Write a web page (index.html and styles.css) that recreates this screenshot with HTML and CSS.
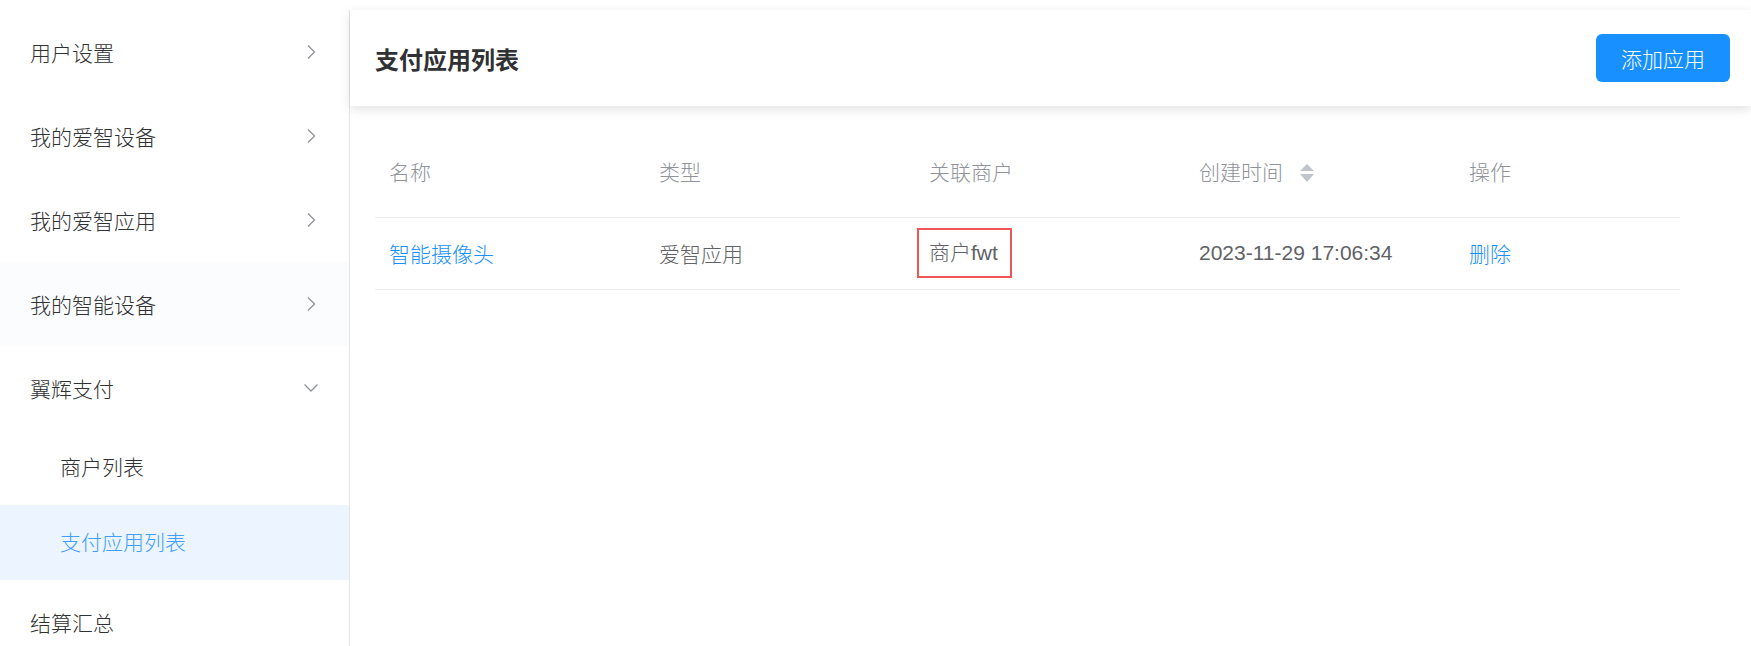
FILE: index.html
```html
<!DOCTYPE html>
<html lang="zh-CN">
<head>
<meta charset="utf-8">
<title>支付应用列表</title>
<link rel="stylesheet" href="styles.css">
</head>
<body>
<div class="app">
  <aside class="sidebar">
    <ul class="menu">
      <li class="menu-item">
        <span>用户设置</span>
        <svg class="arrow" viewBox="0 0 14 14"><polyline points="4,0.5 10.5,7 4,13.5"/></svg>
      </li>
      <li class="menu-item">
        <span>我的爱智设备</span>
        <svg class="arrow" viewBox="0 0 14 14"><polyline points="4,0.5 10.5,7 4,13.5"/></svg>
      </li>
      <li class="menu-item">
        <span>我的爱智应用</span>
        <svg class="arrow" viewBox="0 0 14 14"><polyline points="4,0.5 10.5,7 4,13.5"/></svg>
      </li>
      <li class="menu-item hover">
        <span>我的智能设备</span>
        <svg class="arrow" viewBox="0 0 14 14"><polyline points="4,0.5 10.5,7 4,13.5"/></svg>
      </li>
      <li class="menu-item">
        <span>翼辉支付</span>
        <svg class="arrow" viewBox="0 0 14 14"><polyline points="0.5,3.5 7,10 13.5,3.5"/></svg>
      </li>
      <li class="sub-item">商户列表</li>
      <li class="sub-item active">支付应用列表</li>
      <li class="menu-item">
        <span>结算汇总</span>
      </li>
    </ul>
  </aside>
  <main class="main">
    <header class="header">
      <h1 class="title">支付应用列表</h1>
      <button class="btn-primary">添加应用</button>
    </header>
    <section class="content">
      <table class="table">
        <colgroup>
          <col class="c1"><col class="c2"><col class="c3"><col class="c4"><col class="c5">
        </colgroup>
        <thead>
          <tr>
            <th>名称</th>
            <th>类型</th>
            <th>关联商户</th>
            <th><span class="th-sort">创建时间<span class="caret"><i class="up"></i><i class="down"></i></span></span></th>
            <th>操作</th>
          </tr>
        </thead>
        <tbody>
          <tr>
            <td><a class="link">智能摄像头</a></td>
            <td>爱智应用</td>
            <td><span class="mark">商户fwt</span></td>
            <td>2023-11-29 17:06:34</td>
            <td><a class="link">删除</a></td>
          </tr>
        </tbody>
      </table>
    </section>
  </main>
</div>
</body>
</html>
```

FILE: styles.css
```css
* { box-sizing: border-box; }
html, body {
  margin: 0;
  padding: 0;
  background: #fff;
  font-family: "Liberation Sans", "Noto Sans CJK SC", sans-serif;
  font-weight: 300;
  color: #303133;
}
.app {
  display: flex;
  height: 646px;
  padding-top: 10px;
  overflow: hidden;
}
.sidebar {
  width: 350px;
  flex: none;
  border-right: 1px solid #e6e6e6;
}
.menu {
  list-style: none;
  margin: 0;
  padding: 0;
}
.menu-item {
  height: 84px;
  display: flex;
  align-items: center;
  justify-content: space-between;
  padding: 0 31px 0 30px;
  font-size: 21px;
  color: #303133;
}
.menu-item.hover { background: #fbfcfe; }
.sub-item {
  height: 75px;
  line-height: 75px;
  padding-left: 60px;
  font-size: 21px;
  color: #303133;
}
.sub-item.active {
  background: #ecf5ff;
  color: #409eff;
}
.arrow {
  width: 14px;
  height: 14px;
  fill: none;
  stroke: #909399;
  stroke-width: 1.3;
}
.main {
  flex: 1;
  min-width: 0;
}
.header {
  height: 96px;
  display: flex;
  align-items: center;
  justify-content: space-between;
  padding: 0 21px 0 25px;
  background: #fff;
  box-shadow: 0 3px 10px rgba(0, 0, 0, 0.12);
  position: relative;
}
.title {
  margin: 0;
  font-size: 24px;
  font-weight: bold;
  color: #303133;
}
.btn-primary {
  width: 134px;
  height: 48px;
  border: none;
  border-radius: 6px;
  background: #1890ff;
  color: #fff;
  font-family: inherit;
  font-weight: 300;
  font-size: 21px;
  padding: 0;
}
.content {
  padding: 31px 0 0 25px;
}
.table {
  width: 1305px;
  border-collapse: collapse;
  table-layout: fixed;
  font-size: 21px;
}
.c1, .c2, .c3, .c4 { width: 270px; }
.c5 { width: 225px; }
.table th {
  height: 80px;
  line-height: 72px;
  vertical-align: top;
  text-align: left;
  font-weight: 300;
  color: #909399;
  padding: 0 14px;
  border-bottom: 1px solid #ebeef5;
}
.table td {
  height: 72px;
  padding: 0 14px;
  color: #606266;
  border-bottom: 1px solid #ebeef5;
  vertical-align: middle;
}
.th-sort {
  display: inline-flex;
  align-items: center;
}
.caret {
  display: inline-flex;
  flex-direction: column;
  align-items: center;
  gap: 3px;
  margin-left: 17px;
}
.caret i {
  display: block;
  width: 0;
  height: 0;
  border-left: 7px solid transparent;
  border-right: 7px solid transparent;
}
.caret .up { border-bottom: 7px solid #c0c4cc; }
.caret .down { border-top: 8px solid #c0c4cc; }
.link {
  color: #1890ff;
  text-decoration: none;
}
.mark {
  display: inline-block;
  margin-left: -12px;
  padding: 0 12px 0 10px;
  height: 50px;
  line-height: 46px;
  border: 2px solid #f05454;
  color: #606266;
}
```
